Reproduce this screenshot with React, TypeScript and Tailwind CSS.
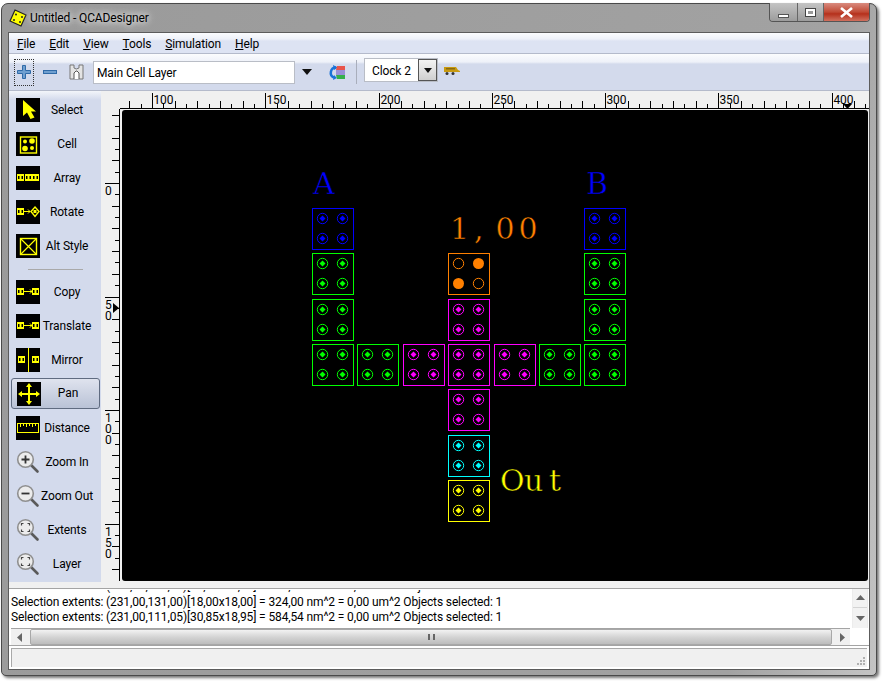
import { ReactNode } from "react";

const BLUE = "#0000ff";
const GREEN = "#00ff00";
const PINK = "#ff00ff";
const ORANGE = "#ff8000";
const CYAN = "#00ffff";
const YELLOW = "#ffff00";

// screen coordinates of the cells, canvas group is shifted by (-122,-110)
const cells: [number, number, string][] = [
  [312, 208, BLUE],
  [312, 253, GREEN],
  [312, 299, GREEN],
  [312, 344, GREEN],
  [584, 208, BLUE],
  [584, 253, GREEN],
  [584, 299, GREEN],
  [584, 344, GREEN],
  [357, 344, GREEN],
  [403, 344, PINK],
  [494, 344, PINK],
  [539, 344, GREEN],
  [448, 299, PINK],
  [448, 344, PINK],
  [448, 389, PINK],
  [448, 435, CYAN],
  [448, 480, YELLOW],
];

const menus = ["File", "Edit", "View", "Tools", "Simulation", "Help"];
const message = "Selection extents: (231,00,131,00)[18,00x18,00] = 324,00 nm^2 = 0,00 um^2 Objects selected: 1";
const message2 = "Selection extents: (231,00,111,05)[30,85x18,95] = 584,54 nm^2 = 0,00 um^2 Objects selected: 1";

function Cell({ x, y, color }: { x: number; y: number; color: string }) {
  const dots = [
    [10, 10],
    [30, 10],
    [10, 30],
    [30, 30],
  ];
  return (
    <g>
      <rect x={x + 0.5} y={y + 0.5} width={41} height={41} fill="none" stroke={color} />
      {dots.map(([dx, dy]) => (
        <g key={`${dx}-${dy}`}>
          <circle cx={x + dx + 0.5} cy={y + dy + 0.5} r={5.2} fill="none" stroke={color} />
          <path
            d={`M${x + dx + 0.5} ${y + dy - 2.5}l3 3l-3 3l-3 -3z`}
            fill={color}
          />
        </g>
      ))}
    </g>
  );
}

function PolarCell({ x, y }: { x: number; y: number }) {
  return (
    <g>
      <rect x={x + 0.5} y={y + 0.5} width={41} height={41} fill="none" stroke={ORANGE} />
      <circle cx={x + 10.5} cy={y + 10.5} r={5.2} fill="none" stroke={ORANGE} />
      <circle cx={x + 30.5} cy={y + 10.5} r={5.5} fill={ORANGE} />
      <circle cx={x + 10.5} cy={y + 30.5} r={5.5} fill={ORANGE} />
      <circle cx={x + 30.5} cy={y + 30.5} r={5.2} fill="none" stroke={ORANGE} />
    </g>
  );
}

function Label({ x, y, color, children }: { x: string; y: number; color: string; children: string }) {
  // black stroke on top of the fill thins the glyphs down to the look of the drawing area font
  return (
    <text x={x} y={y} fontSize={30} fontFamily="DejaVu Serif, serif" fill={color} stroke="#000" strokeWidth={0.5}>
      {children}
    </text>
  );
}

function Canvas() {
  return (
    <svg width={746} height={471} className="block">
      <g transform="translate(-122 -110)">
        {cells.map(([x, y, c]) => (
          <Cell key={`${x}-${y}`} x={x} y={y} color={c} />
        ))}
        <PolarCell x={448} y={253} />
        <Label x="313" y={194} color={BLUE}>A</Label>
        <Label x="586" y={194} color={BLUE}>B</Label>
        <Label x="450 474 495.500 518.500" y={239} color={ORANGE}>1,00</Label>
        <Label x="500 524 549" y={491} color={YELLOW}>Out</Label>
      </g>
    </svg>
  );
}

function TopRuler() {
  const ticks = [];
  // 2.263 px per unit, ruler svg starts at screen x = 102
  for (let u = 90; u <= 415; u += 5) {
    const x = Math.round(152 + (u - 100) * 2.265) - 102 + 0.5;
    const h = u % 50 === 0 ? 15 : u % 10 === 0 ? 7 : 4;
    ticks.push(<line key={u} x1={x} x2={x} y1={17 - h} y2={17} stroke="#000" />);
    if (u % 50 === 0) {
      ticks.push(
        <text key={`t${u}`} x={x + 1} y={13} fontSize={12} fill="#000">
          {u}
        </text>
      );
    }
  }
  return (
    <svg width={767} height={18} className="block font-['Roboto',sans-serif]">
      <rect x={18} y={17} width={749} height={1} fill="#000" />
      {ticks}
      <path d="M741 13h9l-4.500 5z" fill="#000" />
    </svg>
  );
}

function LeftRuler() {
  const items = [];
  for (let u = -30; u <= 170; u += 5) {
    const y = Math.round(183 + u * 2.27) - 109 + 0.5;
    if (y < 0 || y > 472) continue;
    const w = u % 50 === 0 ? 14 : u % 10 === 0 ? 7 : 4;
    items.push(<line key={u} x1={17 - w} x2={17} y1={y} y2={y} stroke="#000" />);
    if (u % 50 === 0) {
      String(u)
        .split("")
        .forEach((d, i) => {
          items.push(
            <text key={`d${u}${i}`} x={3} y={y + 11 + i * 11} fontSize={12} fill="#000">
              {d}
            </text>
          );
        });
    }
  }
  return (
    <svg width={18} height={472} className="block font-['Roboto',sans-serif]">
      <rect x={17} y={0} width={1} height={472} fill="#000" />
      {items}
      <path d="M11 194l6 5l-6 5z" fill="#000" />
    </svg>
  );
}

function Mini({ x, y }: { x: number; y: number }) {
  return (
    <g>
      <rect x={x} y={y} width={7} height={7} fill={YELLOW} />
      <rect x={x + 1} y={y + 2} width={1.500} height={3} fill="#000" />
      <rect x={x + 4.500} y={y + 2} width={1.500} height={3} fill="#000" />
    </g>
  );
}

function Tile({ children }: { children: ReactNode }) {
  return (
    <svg width={24} height={24} viewBox="0 0 24 24" className="block bg-black">
      {children}
    </svg>
  );
}

const iconSelect = (
  <Tile>
    <path d="M7 2v16l4-3.500l3.500 6.500l4-1.500l-3.500-6h5z" fill={YELLOW} />
  </Tile>
);
const iconCell = (
  <Tile>
    <rect x={4.500} y={5} width={16} height={16} fill="none" stroke={YELLOW} strokeWidth={1.400} />
    <circle cx={9} cy={9.500} r={2} fill={YELLOW} />
    <circle cx={16} cy={9} r={2.800} fill={YELLOW} />
    <circle cx={9} cy={16.500} r={2.800} fill={YELLOW} />
    <circle cx={16} cy={16} r={2} fill={YELLOW} />
  </Tile>
);
const iconArray = (
  <Tile>
    <Mini x={1} y={8} />
    <Mini x={9} y={8} />
    <Mini x={16} y={8} />
  </Tile>
);
const iconRotate = (
  <Tile>
    <Mini x={1} y={8} />
    <path d="M8 11.500h6M12 9.500l2 2l-2 2" stroke={YELLOW} fill="none" />
    <path d="M19 7l4 4.500l-4 5l-4-5z" fill="none" stroke={YELLOW} strokeWidth={1.400} />
    <rect x={17.500} y={10} width={3} height={3} fill={YELLOW} />
  </Tile>
);
const iconAlt = (
  <Tile>
    <rect x={4.500} y={4.500} width={16} height={16} fill="none" stroke={YELLOW} strokeWidth={1.400} />
    <path d="M5 5l15 15M20 5L5 20" stroke={YELLOW} strokeWidth={1.200} />
  </Tile>
);
const iconCopy = (
  <Tile>
    <Mini x={1} y={8} />
    <path d="M8 11.500h8M14 9.500l2 2l-2 2" stroke={YELLOW} fill="none" />
    <Mini x={16} y={8} />
  </Tile>
);
const iconMirror = (
  <Tile>
    <Mini x={2} y={8} />
    <line x1={12.500} x2={12.500} y1={0} y2={24} stroke={YELLOW} />
    <Mini x={16} y={8} />
  </Tile>
);
const iconPan = (
  <Tile>
    <path d="M12 1l-3 4h2v6H5V9l-4 3l4 3v-2h6v6H9l3 4l3-4h-2v-6h6v2l4-3l-4-3v2h-6V5h2z" fill={YELLOW} />
  </Tile>
);
const iconDistance = (
  <Tile>
    <rect x={1.500} y={7.500} width={21} height={9} fill="none" stroke={YELLOW} />
    <path d="M4.500 8v3M7.500 8v2M10.500 8v3M13.500 8v2M16.500 8v3M19.500 8v2" stroke={YELLOW} />
  </Tile>
);

function Magnifier({ mark }: { mark: "plus" | "minus" | "box" }) {
  return (
    <svg width={24} height={24} viewBox="0 0 24 24" className="block">
      <path d="M15 15l6.500 6.500" stroke="#5a5a5a" strokeWidth={2.600} strokeLinecap="round" />
      <circle cx={9.500} cy={9.500} r={7.800} fill="#ececec" stroke="#8f8f8f" strokeWidth={1.600} />
      {mark === "plus" && <path d="M5.500 9.500h8M9.500 5.500v8" stroke="#333" strokeWidth={1.800} />}
      {mark === "minus" && <path d="M5.500 9.500h8" stroke="#333" strokeWidth={1.800} />}
      {mark === "box" && (
        <path
          d="M5.500 7.500v-2h2M11.500 5.500h2v2M13.500 11.500v2h-2M7.500 13.500h-2v-2"
          fill="none"
          stroke="#444"
          strokeWidth={1.200}
        />
      )}
    </svg>
  );
}

function ToolButton({ icon, label }: { icon: ReactNode; label: string }) {
  return (
    <div className="flex h-[34px] items-center pl-[7px]">
      {icon}
      <div className="flex w-[54px] justify-center whitespace-nowrap">{label}</div>
    </div>
  );
}

function Sidebar() {
  return (
    <div className="flex h-[491px] w-[92px] flex-col bg-[#d3daec] pt-[2px] bg-[linear-gradient(#f3f5fa,#d3daec_9px)]">
      <ToolButton icon={iconSelect} label="Select" />
      <ToolButton icon={iconCell} label="Cell" />
      <ToolButton icon={iconArray} label="Array" />
      <ToolButton icon={iconRotate} label="Rotate" />
      <ToolButton icon={iconAlt} label="Alt Style" />
      <div className="flex h-[12px] items-center pl-[19px]">
        <div className="h-[1px] w-[55px] bg-[#a9a9a9]" />
      </div>
      <ToolButton icon={iconCopy} label="Copy" />
      <ToolButton icon={iconCopy} label="Translate" />
      <ToolButton icon={iconMirror} label="Mirror" />
      <div className="mt-[1px] h-[33px] pl-[2px]">
        <div className="flex h-[31px] w-[89px] items-center rounded-[3px] border border-[#5f6b80] bg-[linear-gradient(#dfe3ee,#b9c2d6)] pl-[5px]">
          {iconPan}
          <div className="flex w-[54px] justify-center">Pan</div>
        </div>
      </div>
      <ToolButton icon={iconDistance} label="Distance" />
      <ToolButton icon={<Magnifier mark="plus" />} label="Zoom In" />
      <ToolButton icon={<Magnifier mark="minus" />} label="Zoom Out" />
      <ToolButton icon={<Magnifier mark="box" />} label="Extents" />
      <ToolButton icon={<Magnifier mark="box" />} label="Layer" />
    </div>
  );
}

function Toolbar() {
  return (
    <div className="flex h-[37px] items-center border-b border-[#b4bacb] bg-[linear-gradient(#fbfcfe,#eef1f9_8px,#d3daec_10px,#d3daec)] pl-[5px]">
      <div className="flex h-[27px] w-[20px] items-center justify-center border border-dotted border-[#333]">
        <svg width={16} height={16} viewBox="0 0 16 16">
          <path d="M6.500 1.500h3v5h5v3h-5v5h-3v-5h-5v-3h5z" fill="#6f9fd0" stroke="#2f6aa8" />
        </svg>
      </div>
      <svg width={16} height={6} viewBox="0 0 16 6" className="ml-[8px]">
        <rect x={1.500} y={1.500} width={13} height={3} fill="#6f9fd0" stroke="#2f6aa8" />
      </svg>
      <svg width={15} height={16} viewBox="0 0 15 16" className="ml-[11px]">
        <path d="M1 1h4v3q2 2 5 0V1h4v14H1z" fill="#e4e4e4" stroke="#777" />
        <path d="M5 15V9l2-2h1l2 2v6" fill="#fff" stroke="#555" />
      </svg>
      <div className="ml-[9px] flex h-[23px] w-[202px] items-center border border-[#b9bdc6] bg-white pl-[3px] pt-[2px]">
        Main Cell Layer
      </div>
      <svg width={10} height={6} viewBox="0 0 10 6" className="ml-[7px]">
        <path d="M0 0h10l-5 6z" fill="#111" />
      </svg>
      <svg width={17} height={15} viewBox="0 0 17 15" className="ml-[16px]">
        <path d="M8 2.500a5.200 5.200 0 0 0-2 10" fill="none" stroke="#1a73d8" strokeWidth={2.500} />
        <path d="M5 0l5 2.500L6 5zM6 10l3 3l-4 2z" fill="#1a73d8" />
        <path d="M9 1h8v4H8z" fill="#e8544a" />
        <path d="M8 5h9v5H8z" fill="#9a8fd8" />
        <path d="M8 10h9v4H9z" fill="#35b04a" />
      </svg>
      <div className="ml-[11px] h-[24px] w-[1px] bg-[#a9aebb]" />
      <div className="-mt-[4px] ml-[7px] flex h-[24px] w-[74px] items-center justify-between border border-[#b9bdc6] bg-white pl-[7px]">
        <span className="pt-[2px]">Clock 2</span>
        <div className="flex h-[22px] w-[19px] items-center justify-center border border-[#555] bg-[linear-gradient(#f4f4f4,#cfcfcf)]">
          <svg width={8} height={5} viewBox="0 0 8 5">
            <path d="M0 0h8l-4 5z" fill="#111" />
          </svg>
        </div>
      </div>
      <svg width={16} height={8} viewBox="0 0 16 8" className="ml-[6px] -mt-[2px]">
        <path d="M0 0h12l2 3l2 1v1H0z" fill="#c89a10" />
        <rect x={2} y={1} width={9} height={1.500} fill="#8a6a10" />
        <circle cx={3} cy={6.500} r={1.500} fill="#333" />
        <circle cx={9} cy={6.500} r={1.500} fill="#333" />
      </svg>
    </div>
  );
}

function ScrollArrow({ d }: { d: string }) {
  return (
    <svg width={9} height={9} viewBox="0 0 9 9">
      <path d={d} fill="#666" />
    </svg>
  );
}

export default function App() {
  return (
    <div className="h-[681px] w-[883px] overflow-hidden bg-white pl-[1px] pt-[3px] font-['Roboto',sans-serif] text-[12px] leading-[15px] tracking-[-0.13px] text-black">
      <div className="flex h-[673px] w-[876px] flex-col rounded-[7px] rounded-b-[5px] border border-[#4a4a4a] bg-[#a6a6a6] bg-[linear-gradient(100deg,#9a9a9a,#a2a2a2_85%,#c4c4c4)] px-[6px] shadow-[2px_2px_3px_#777]">
        <div className="flex h-[28px] shrink-0 items-start">
          <svg width={18} height={18} viewBox="0 0 18 18" className="mt-[5px] ml-[1px]">
            <path d="M6 1l11 5l-5 11L1 12z" fill={YELLOW} stroke="#222" strokeWidth={1.200} />
            <circle cx={7} cy={5.500} r={1} fill="#222" />
            <circle cx={13} cy={8} r={1} fill="#222" />
            <circle cx={5} cy={11} r={1} fill="#222" />
            <circle cx={11} cy={13} r={1} fill="#222" />
          </svg>
          <div className="mt-[7px] ml-[3px] whitespace-nowrap [text-shadow:0_0_6px_#fff,0_0_10px_#ddd]">
            Untitled - QCADesigner
          </div>
          <div className="-mt-[1px] ml-auto flex h-[19px] w-[101px] overflow-hidden rounded-b-[4px] border border-t-0 border-[#555]">
            <div className="flex w-[28px] items-end justify-center border-r border-[#666] bg-[linear-gradient(#c4c4c4,#9c9c9c)] pb-[3px]">
              <div className="h-[4px] w-[11px] border border-[#555] bg-white" />
            </div>
            <div className="flex w-[26px] items-center justify-center border-r border-[#666] bg-[linear-gradient(#c4c4c4,#9c9c9c)]">
              <div className="flex h-[9px] w-[11px] items-center justify-center border border-[#444] bg-white">
                <div className="h-[3px] w-[5px] bg-[#999]" />
              </div>
            </div>
            <div className="flex flex-1 items-center justify-center bg-[linear-gradient(#d98b7f,#c04a35_50%,#b5301c_60%,#d0705e)]">
              <svg width={13} height={11} viewBox="0 0 13 11">
                <path d="M1 1l11 9M12 1L1 10" stroke="#fff" strokeWidth={2.600} />
              </svg>
            </div>
          </div>
        </div>

        <div className="flex h-[638px] shrink-0 flex-col border border-[#5c5c5c] bg-[#f0f0f0]">
          <div className="flex h-[21px] shrink-0 items-center border-b border-[#b4bacb] bg-[linear-gradient(#fbfcfe,#eef1f9_6px,#dde3f3_8px,#dde3f3)] pl-[8px] pt-[2px]">
            {menus.map((m) => (
              <div key={m} className="mr-[14px]">
                <span className="underline">{m[0]}</span>
                {m.slice(1)}
              </div>
            ))}
          </div>
          <Toolbar />

          <div className="flex h-[497px] shrink-0">
            <Sidebar />
            <div className="ml-[1px] flex flex-col">
              <TopRuler />
              <div className="flex">
                <LeftRuler />
                <div className="mt-[1px] ml-[2px] h-[471px] overflow-hidden rounded-[3px] bg-black">
                  <Canvas />
                </div>
              </div>
            </div>
          </div>

          <div className="flex h-[40px] shrink-0 border-t border-[#a4a4a4] bg-white pl-[2px]">
            <div className="h-[39px] flex-1 overflow-hidden whitespace-nowrap">
              <div className="mt-[1px] h-[3px] overflow-hidden">
                <div className="-mt-[11px]">{message}</div>
              </div>
              <div className="mt-[2px]">{message}</div>
              <div>{message2}</div>
            </div>
            <div className="mr-[1px] flex w-[16px] flex-col border-x border-[#ececec] bg-[#f2f2f2] pt-[1px]">
              <div className="flex h-[18px] items-center justify-center border-b border-[#d4d4d4]">
                <ScrollArrow d="M0 6l4.500-5l4.500 5z" />
              </div>
              <div className="flex h-[18px] items-center justify-center">
                <ScrollArrow d="M0 3h9l-4.500 5z" />
              </div>
            </div>
          </div>

          <div className="flex h-[18px] shrink-0 border-b border-[#a4a4a4] bg-white pl-[2px]">
            <div className="flex h-[17px] w-[839px] border-t border-[#a4a4a4] bg-[#f0f0f0]">
              <div className="flex w-[19px] items-center justify-center">
                <ScrollArrow d="M6 0v9l-5-4.500z" />
              </div>
              <div className="relative flex flex-1 items-center justify-center rounded-[2px] border border-[#a8a8a8] bg-[linear-gradient(#f2f2f2,#d4d4d4_50%,#bcbcbc)]">
                <div className="h-[6px] w-[7px] border-x-2 border-[#666]" />
              </div>
              <div className="flex w-[18px] items-center justify-center">
                <ScrollArrow d="M3 0v9l5-4.500z" />
              </div>
            </div>
          </div>

          <div className="flex h-[23px] shrink-0 items-start bg-white">
            <div className="relative mt-[2px] ml-[2px] h-[19px] w-[856px] border-l border-t border-[#a9a9a9] bg-[#f0f0f0]">
              <svg width={10} height={10} viewBox="0 0 10 10" className="absolute right-[1px] bottom-[1px]">
                <path d="M7 1h2v2H7zM4 4h2v2H4zM7 4h2v2H7zM1 7h2v2H1zM4 7h2v2H4zM7 7h2v2H7z" fill="#b0b0b0" />
              </svg>
            </div>
          </div>
        </div>
      </div>
    </div>
  );
}
